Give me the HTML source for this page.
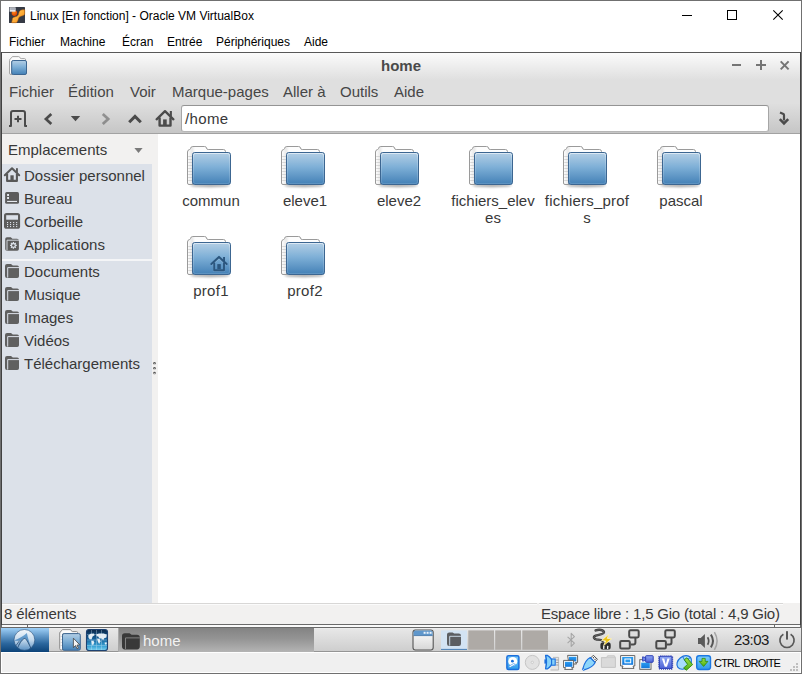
<!DOCTYPE html>
<html><head><meta charset="utf-8">
<style>
*{box-sizing:border-box;margin:0;padding:0}
html,body{width:802px;height:674px;overflow:hidden;background:#fff}
body{font-family:"Liberation Sans",sans-serif;position:relative}
.a{position:absolute}
.t{position:absolute;white-space:nowrap;line-height:1}
.ht{font-size:12px;color:#000}
.gm{font-size:15px;color:#464646}
.sp{font-size:15px;color:#383838}
.lbl{position:absolute;width:110px;text-align:center;font-size:15px;line-height:17px;color:#383838;white-space:nowrap}
svg{position:absolute;overflow:visible}
</style></head><body>
<!-- shared defs -->
<svg width="0" height="0" style="left:0;top:0">
<defs>
<linearGradient id="fblue" x1="0" y1="0" x2="0" y2="1"><stop offset="0" stop-color="#b4cfe5"/><stop offset=".45" stop-color="#7fb0d7"/><stop offset="1" stop-color="#4380b6"/></linearGradient>
<linearGradient id="fback" x1="0" y1="0" x2="1" y2="0"><stop offset="0" stop-color="#ffffff"/><stop offset=".12" stop-color="#e9e9e9"/><stop offset=".2" stop-color="#fdfdfd"/></linearGradient>
<linearGradient id="fhl" x1="0" y1="0" x2="0" y2="1"><stop offset="0" stop-color="#fff" stop-opacity=".55"/><stop offset=".15" stop-color="#fff" stop-opacity=".2"/><stop offset="1" stop-color="#fff" stop-opacity=".12"/></linearGradient>
<filter id="blur1" x="-20%" y="-100%" width="140%" height="300%"><feGaussianBlur stdDeviation="1.1"/></filter>
<symbol id="folder" viewBox="0 0 52 48" overflow="visible">
  <ellipse cx="26" cy="43.6" rx="20" ry="1.6" fill="#000" opacity=".32" filter="url(#blur1)"/>
  <path d="M3.5,41 V10 Q3.5,8 5.4,7.6 Q6.5,7.3 6.6,6.4 Q6.8,4.5 8.8,4.5 H20.4 Q22.4,4.5 22.5,6 Q22.6,7.5 24.2,7.5 H39.4 Q41.5,7.5 41.5,9.6 V14 H9 V42.5 H5 Q3.5,42.5 3.5,41 Z" fill="url(#fback)" stroke="#9a9a9a" stroke-width="1"/>
  <g stroke="#c4c4c4" stroke-width="1.2" opacity=".6"><path d="M4.2,14.5H8M4.2,17.5H8M4.2,20.5H8M4.2,23.5H8M4.2,26.5H8M4.2,29.5H8M4.2,32.5H8M4.2,35.5H8M4.2,38.5H8"/></g>
  <rect x="8.5" y="10.5" width="38" height="32" rx="2.2" fill="url(#fblue)" stroke="#3c6691" stroke-width="1"/>
  <rect x="9.5" y="11.5" width="36" height="30" rx="1.8" fill="none" stroke="url(#fhl)" stroke-width="1"/>
</symbol>
</defs>
</svg>
<!-- host window border -->
<div class="a" style="left:0;top:0;width:802px;height:674px;border:1px solid #707070"></div>

<!-- host title -->
<svg style="left:0;top:0" width="802" height="52" viewBox="0 0 802 52">
 <defs>
  <linearGradient id="vbo" x1="0" y1="0" x2="1" y2="1"><stop offset="0" stop-color="#ffd06a"/><stop offset=".5" stop-color="#ffae38"/><stop offset="1" stop-color="#f08a18"/></linearGradient>
  <radialGradient id="vbr" cx=".4" cy=".35" r=".7"><stop offset="0" stop-color="#ff8a1a"/><stop offset="1" stop-color="#d83a00"/></radialGradient>
 </defs>
 <rect x="9" y="7" width="16" height="16" rx=".6" fill="#353a45"/>
 <circle cx="14.4" cy="13.1" r="2.8" fill="url(#vbr)"/>
 <path d="M19.4,11.6 Q20.4,9.9 22.4,9.8 H24.7 V14.3 Q23.6,15.9 20.8,16.2 Q18.9,16.7 18.4,18.5 Q17.9,21.4 16.4,22.7 H11.7 L12.5,18.5 Q13,17.1 15,16.9 Q17.6,16.6 18.4,14.8 Q18.9,13 19.4,11.6 Z" fill="url(#vbo)" stroke="#c4650c" stroke-width=".5"/>
 <rect x="9.6" y="7.4" width="6" height="4.3" fill="#e4e6ea"/>
 <rect x="10.2" y="8" width="4.8" height="2" fill="#8a909c" opacity=".6"/>
 <rect x="682" y="15" width="10" height="1" fill="#000"/>
 <rect x="727.5" y="10.5" width="9" height="9" fill="none" stroke="#000" stroke-width="1"/>
 <path d="M773.3,10.3 L782.7,19.7 M782.7,10.3 L773.3,19.7" stroke="#000" stroke-width="1.1"/>
</svg>
<div class="t ht" style="left:30px;top:10px">Linux [En fonction] - Oracle VM VirtualBox</div>
<!-- host menu -->
<div class="t ht" style="left:9px;top:36px">Fichier</div>
<div class="t ht" style="left:60px;top:36px">Machine</div>
<div class="t ht" style="left:122px;top:36px">Écran</div>
<div class="t ht" style="left:167px;top:36px">Entrée</div>
<div class="t ht" style="left:216px;top:36px">Périphériques</div>
<div class="t ht" style="left:304px;top:36px">Aide</div>

<!-- guest chrome -->
<div class="a" style="left:1px;top:52px;width:800px;height:576px;background:#414141"></div><div class="a" style="left:2px;top:52px;width:798px;height:1px;background:#585858"></div>
<div class="a" style="left:2px;top:53px;width:798px;height:27px;background:linear-gradient(#fbfbfb,#dfdfdf)"></div>
<div class="a" style="left:2px;top:80px;width:798px;height:24px;background:#dfdfdf"></div>
<div class="a" style="left:2px;top:104px;width:798px;height:29px;background:linear-gradient(#dedede,#c6c6c6)"></div>
<div class="a" style="left:2px;top:133px;width:798px;height:1px;background:#a2a2a2"></div>
<div class="t" style="left:2px;width:798px;text-align:center;top:58px;font-size:15px;font-weight:bold;color:#4a4a4a">home</div>
<svg style="left:0;top:53px" width="802" height="27" viewBox="0 53 802 27">
 <path d="M9.5,73 V60.4 Q9.5,59 10.8,58.6 L11.6,57.4 Q12,56.6 13,56.6 H18.6 Q19.6,56.6 19.9,57.6 Q20.2,58.6 21.2,58.6 H24.4 Q25.6,58.6 25.6,59.8 V61 H12 V74.5 H11 Q9.5,74.5 9.5,73 Z" fill="#fbfbfb" stroke="#9c9c9c" stroke-width=".9"/>
 <rect x="11.7" y="60.5" width="14.8" height="14" rx="1.5" fill="url(#fblue)" stroke="#3c6691" stroke-width="1"/>
 <g fill="#757575">
  <rect x="732" y="64" width="9" height="2"/>
  <rect x="756" y="64" width="10" height="2"/><rect x="760" y="60" width="2" height="10"/>
 </g>
 <path d="M780.7,61.4 L788.6,69.4 M788.6,61.4 L780.7,69.4" stroke="#757575" stroke-width="2"/>
</svg>
<!-- guest menu -->
<div class="t gm" style="left:9px;top:84px">Fichier</div>
<div class="t gm" style="left:68px;top:84px">Édition</div>
<div class="t gm" style="left:130px;top:84px">Voir</div>
<div class="t gm" style="left:172px;top:84px">Marque-pages</div>
<div class="t gm" style="left:283px;top:84px">Aller à</div>
<div class="t gm" style="left:340px;top:84px">Outils</div>
<div class="t gm" style="left:394px;top:84px">Aide</div>
<!-- location entry -->
<div class="a" style="left:181px;top:105px;width:588px;height:27px;background:#fff;border:1px solid #a6a6a6;border-top-color:#949494;border-bottom-color:#b6b6b6;border-radius:3px"></div>
<div class="t" style="left:185px;top:111px;font-size:15px;color:#383838;letter-spacing:.35px">/home</div>

<!-- toolbar icons -->
<svg style="left:0;top:104px" width="802" height="30" viewBox="0 104 802 30">
 <g id="tbi" fill="none" stroke="#4b4b4b">
  <!-- new tab -->
  <path d="M9,126 H11 V113 Q11,111 13,111 H23 Q25,111 25,113 V126 H27" stroke-width="2" stroke-linejoin="round"/>
  <path d="M14.5,119 H21.5 M18,115.8 V122.2" stroke-width="2"/>
  <!-- back -->
  <path d="M51.3,113.9 L45.9,119 L51.3,124.1" stroke-width="2.7"/>
  <!-- forward (disabled) -->
  <path d="M102.8,113.9 L108.2,119 L102.8,124.1" stroke-width="2.7" opacity=".5"/>
  <!-- up -->
  <path d="M129.2,122.2 L135,116.4 L140.8,122.2" stroke-width="3"/>
  <!-- home -->
  <path d="M156.6,119.3 L165,111.2 L173.4,119.3" stroke-width="2.3" stroke-linejoin="round" stroke-linecap="round"/>
  <path d="M159.6,117.5 V125.6 H170.5 V117.5" stroke-width="2.4" stroke-linejoin="round"/>
  <!-- go -->
  <path d="M780,112.6 L783.4,114 Q784,114.3 784,115.2 V120.4" stroke-width="2.2"/>
  <path d="M779.8,119.2 L784,123.4 L788.2,119.2" stroke-width="2.6"/>
 </g>
 <g fill="#4b4b4b">
  <polygon points="70.8,116 80.2,116 75.5,121.2"/>
  <rect x="169.8" y="111" width="2.1" height="5.5"/>
  <rect x="163.1" y="119.4" width="3.6" height="5.6"/>
 </g>
</svg>
<!-- side pane -->
<div class="a" style="left:2px;top:134px;width:156px;height:469px;background:#f2f1f0"></div>
<div class="a" style="left:2px;top:164px;width:150px;height:439px;background:#dce1e9"></div>
<div class="a" style="left:2px;top:259px;width:150px;height:2px;background:#f4f5f7"></div>
<div class="t sp" style="left:8px;top:142px">Emplacements</div>
<div class="t sp" style="left:24px;top:168px">Dossier personnel</div>
<div class="t sp" style="left:24px;top:191px">Bureau</div>
<div class="t sp" style="left:24px;top:214px">Corbeille</div>
<div class="t sp" style="left:24px;top:237px">Applications</div>
<div class="t sp" style="left:24px;top:264px">Documents</div>
<div class="t sp" style="left:24px;top:287px">Musique</div>
<div class="t sp" style="left:24px;top:310px">Images</div>
<div class="t sp" style="left:24px;top:333px">Vidéos</div>
<div class="t sp" style="left:24px;top:356px">Téléchargements</div>

<!-- side icons -->
<svg style="left:0;top:134px" width="160" height="470" viewBox="0 134 160 470">
 <polygon points="134.4,148 142.6,148 138.5,152.9" fill="#7a7a7a"/>
 <!-- home -->
 <g fill="none" stroke="#585858">
  <path d="M4.8,175.2 L12,168.2 L19.2,175.2" stroke-width="2" stroke-linejoin="round" stroke-linecap="round"/>
  <path d="M7.1,174 V180.9 H16.9 V174" stroke-width="2.1" stroke-linejoin="round"/>
 </g>
 <rect x="16" y="168.2" width="1.9" height="4.6" fill="#585858"/>
 <rect x="10.4" y="175.3" width="3.3" height="5" fill="#585858"/>
 <!-- desktop -->
 <rect x="5.1" y="192.1" width="13.9" height="11.7" rx="1.6" fill="#5c5c5c"/>
 <rect x="7.1" y="194" width="1.9" height="2" fill="#e6e9ee"/>
 <rect x="7.1" y="197" width="1.9" height="2" fill="#e6e9ee"/>
 <rect x="7.1" y="200.9" width="9.9" height="1.1" fill="#e6e9ee"/>
 <!-- trash -->
 <rect x="4" y="213.1" width="16.1" height="15.7" rx="2.6" fill="#5c5c5c"/>
 <rect x="6.2" y="215.2" width="11.8" height="4.5" fill="#dce1e9"/>
 <g fill="#dce1e9">
  <rect x="7" y="222" width="1.1" height="1.1"/><rect x="10" y="222" width="1.1" height="1.1"/><rect x="13.1" y="222" width="1.1" height="1.1"/><rect x="16.1" y="222" width="1.1" height="1.1"/>
  <rect x="7" y="224" width="1.1" height="1.1"/><rect x="10" y="224" width="1.1" height="1.1"/><rect x="13.1" y="224" width="1.1" height="1.1"/><rect x="16.1" y="224" width="1.1" height="1.1"/>
  <rect x="7" y="226" width="1.1" height="1.1"/><rect x="10" y="226" width="1.1" height="1.1"/><rect x="13.1" y="226" width="1.1" height="1.1"/><rect x="16.1" y="226" width="1.1" height="1.1"/>
 </g>
 <!-- applications -->
 <path d="M5.2,239 Q5.2,237.3 7,237.3 H10.8 L12.4,238.7 H17 Q18.9,238.7 18.9,240.4 V249 Q18.9,250.7 17.2,250.7 H7 Q5.2,250.7 5.2,249 Z" fill="#5c5c5c"/>
 <path d="M7,250.3 V240.2 H19" fill="none" stroke="#dce1e9" stroke-width=".9"/>
 <g transform="translate(13.4,245.4)">
  <circle r="2.45" fill="#dce1e9"/>
  <g stroke="#dce1e9" stroke-width="1.3"><path d="M0,-3.35V3.35M-3.35,0H3.35M-2.37,-2.37L2.37,2.37M-2.37,2.37L2.37,-2.37"/></g>
  <circle r="1.25" fill="#5c5c5c"/>
 </g>
 <!-- folders -->
 <path d="M5,266 Q5,264 7,264 H11 L12.8,265.5 H17.2 Q19,265.5 19,267.3 V276.2 Q19,278 17.2,278 H7 Q5,278 5,276 Z" fill="#606060"/><path d="M7.7,277.6 V267.6 H19" fill="none" stroke="#dce1e9" stroke-width="1"/><path d="M5,289 Q5,287 7,287 H11 L12.8,288.5 H17.2 Q19,288.5 19,290.3 V299.2 Q19,301 17.2,301 H7 Q5,301 5,299 Z" fill="#606060"/><path d="M7.7,300.6 V290.6 H19" fill="none" stroke="#dce1e9" stroke-width="1"/><path d="M5,312 Q5,310 7,310 H11 L12.8,311.5 H17.2 Q19,311.5 19,313.3 V322.2 Q19,324 17.2,324 H7 Q5,324 5,322 Z" fill="#606060"/><path d="M7.7,323.6 V313.6 H19" fill="none" stroke="#dce1e9" stroke-width="1"/><path d="M5,335 Q5,333 7,333 H11 L12.8,334.5 H17.2 Q19,334.5 19,336.3 V345.2 Q19,347 17.2,347 H7 Q5,347 5,345 Z" fill="#606060"/><path d="M7.7,346.6 V336.6 H19" fill="none" stroke="#dce1e9" stroke-width="1"/><path d="M5,358 Q5,356 7,356 H11 L12.8,357.5 H17.2 Q19,357.5 19,359.3 V368.2 Q19,370 17.2,370 H7 Q5,370 5,368 Z" fill="#606060"/><path d="M7.7,369.6 V359.6 H19" fill="none" stroke="#dce1e9" stroke-width="1"/>
 <!-- paned handle -->
 <g fill="#555"><circle cx="154.5" cy="363.2" r="1.3"/><circle cx="154.5" cy="368.2" r="1.3"/><circle cx="154.5" cy="373.1" r="1.3"/></g>
 <g fill="#f2f1f0" opacity=".7"><circle cx="154.5" cy="364" r=".8"/><circle cx="154.5" cy="369" r=".8"/><circle cx="154.5" cy="373.9" r=".8"/></g>
</svg>
<!-- main area -->
<div class="a" style="left:158px;top:134px;width:642px;height:469px;background:#fff"></div>
<svg style="left:184px;top:142px" width="52" height="48"><use href="#folder"/></svg>
<svg style="left:278px;top:142px" width="52" height="48"><use href="#folder"/></svg>
<svg style="left:372px;top:142px" width="52" height="48"><use href="#folder"/></svg>
<svg style="left:466px;top:142px" width="52" height="48"><use href="#folder"/></svg>
<svg style="left:560px;top:142px" width="52" height="48"><use href="#folder"/></svg>
<svg style="left:654px;top:142px" width="52" height="48"><use href="#folder"/></svg>
<svg style="left:184px;top:232px" width="52" height="48"><use href="#folder"/></svg>
<svg style="left:278px;top:232px" width="52" height="48"><use href="#folder"/></svg>
<svg style="left:184px;top:232px" width="52" height="48" viewBox="0 0 52 48">
 <g transform="translate(0,0.9)" opacity=".35" fill="none" stroke="#cfe2f2"><path d="M27.4,32 L35,24.9 L42.6,32" stroke-width="1.9" stroke-linejoin="round"/><path d="M30.2,31 V37.7 H40 V31" stroke-width="1.7"/></g>
 <g fill="none" stroke="#2b567e"><path d="M27.4,32 L35,24.9 L42.6,32" stroke-width="2.1" stroke-linejoin="round" stroke-linecap="round"/><path d="M30.2,30.5 V38.2 H40 V30.5" stroke-width="1.9" stroke-linejoin="round"/></g>
 <rect x="39.1" y="25" width="1.9" height="4.6" fill="#2b567e"/>
 <rect x="33.3" y="32.1" width="3.5" height="5" fill="#2b567e"/>
</svg>
<div class="lbl" style="left:156px;top:192px">commun</div>
<div class="lbl" style="left:250px;top:192px">eleve1</div>
<div class="lbl" style="left:344px;top:192px">eleve2</div>
<div class="lbl" style="left:438px;top:192px">fichiers_elev<br>es</div>
<div class="lbl" style="left:532px;top:192px;letter-spacing:.2px">fichiers_prof<br>s</div>
<div class="lbl" style="left:626px;top:192px">pascal</div>
<div class="lbl" style="left:156px;top:282px;letter-spacing:.3px">prof1</div>
<div class="lbl" style="left:250px;top:282px;letter-spacing:.3px">prof2</div>

<!-- status bar -->
<div class="a" style="left:2px;top:603px;width:798px;height:21px;background:#f2f1f0"></div>
<div class="a" style="left:2px;top:603px;width:535px;height:2px;background:linear-gradient(#d8d7d6 50%,#fbfbfb 50%)"></div><div class="a" style="left:539px;top:603px;width:244px;height:2px;background:linear-gradient(#d8d7d6 50%,#fbfbfb 50%)"></div>
<div class="t sp" style="left:4px;top:606px;letter-spacing:-0.1px">8 éléments</div>
<div class="t sp" style="left:541px;top:606px;letter-spacing:-0.2px">Espace libre : 1,5 Gio (total : 4,9 Gio)</div>
<div class="a" style="left:2px;top:624px;width:798px;height:1px;background:#6a6a6a"></div>
<div class="a" style="left:1px;top:625px;width:800px;height:2px;background:#fafafa"></div>
<div class="a" style="left:1px;top:627px;width:800px;height:1px;background:#6a6a6a"></div>

<!-- taskbar -->
<div class="a" style="left:1px;top:628px;width:800px;height:24px;background:linear-gradient(#ececec 0,#ececec 1px,#e7e7e7 1px,#cecece 23px,#959595 23px)"></div>
<div class="a" style="left:1px;top:628px;width:48px;height:24px;background:linear-gradient(#9fd0f7,#5e95c6 35%,#2b669d 65%,#0c4378)"></div>
<div class="a" style="left:118px;top:628px;width:196px;height:24px;background:linear-gradient(#838383,#949494 45%,#b4b4b4);border-left:1px solid #a8a8a8"></div>
<div class="t" style="left:143px;top:633px;font-size:15px;color:#f2f2f2">home</div>
<div class="t" style="left:734px;top:632px;font-size:15px;color:#1a1a1a;letter-spacing:-0.55px">23:03</div>
<svg style="left:0;top:624px" width="802" height="30" viewBox="0 624 802 30">
 <defs>
  <linearGradient id="lgcirc" x1="0" y1="0" x2="0" y2="1"><stop offset="0" stop-color="#f4f8fc"/><stop offset=".5" stop-color="#c4d9ec"/><stop offset="1" stop-color="#5b91c3"/></linearGradient>
  <linearGradient id="globeg" x1="0" y1="0" x2="0" y2="1"><stop offset="0" stop-color="#0b2748"/><stop offset=".45" stop-color="#14609a"/><stop offset=".8" stop-color="#3aa4d6"/><stop offset="1" stop-color="#7fd0ee"/></linearGradient>
  <linearGradient id="wing" x1="0" y1="0" x2="0" y2="1"><stop offset="0" stop-color="#6fa6d6"/><stop offset="1" stop-color="#3f78ad"/></linearGradient>
  <linearGradient id="sdbody" x1="0" y1="0" x2="0" y2="1"><stop offset="0" stop-color="#ffffff"/><stop offset="1" stop-color="#d6d6d6"/></linearGradient>
 </defs>
 <!-- notches in border strip -->
 <rect x="1" y="625" width="1" height="2" fill="#6a6a6a"/><rect x="800" y="625" width="1" height="2" fill="#6a6a6a"/><rect x="27" y="625" width="1" height="2" fill="#6a6a6a"/><rect x="774" y="625" width="1" height="2" fill="#6a6a6a"/>
 <!-- menu logo -->
 <circle cx="24.4" cy="639.9" r="10.4" fill="url(#lgcirc)" stroke="#28507c" stroke-width=".6"/>
 <path d="M14.2,640.3 C18,639.3 23,636.3 26.9,632.9 C27.6,637 29.6,643 30.9,648.3 C28.8,643.8 27.3,640.6 25.1,638.3 C22.6,638.8 20.4,642 17.6,647.8 C18.3,644 19.4,642 20.6,640.2 C18.2,641 16.2,641 14.2,640.3 Z" fill="url(#wing)"/>
 <path d="M30.9,648.3 C28.8,643.8 27.3,640.6 25.1,638.3 C22.6,638.8 20.4,642 17.6,647.8 M19.6,640.6 L16,645.6" fill="none" stroke="#1d3f66" stroke-width=".7"/>
 <!-- file manager launcher -->
 <path d="M59.7,648.5 V633 Q59.7,631.8 60.9,631.6 L61.8,630.2 Q62,629.6 62.8,629.6 H70.2 Q71.2,629.6 71.4,630.6 Q71.6,631.6 72.6,631.6 H76.6 Q77.6,631.6 77.6,632.6 V634 H62.5 V650 H61 Q59.7,650 59.7,648.5 Z" fill="#fbfbfb" stroke="#8c8c8c" stroke-width="1"/>
 <path d="M60.4,636.5H62.4M60.4,639.5H62.4M60.4,642.5H62.4M60.4,645.5H62.4" stroke="#d4d4d4" stroke-width=".8"/>
 <rect x="62.5" y="633.6" width="17.8" height="16.7" rx="1.6" fill="url(#fblue)" stroke="#3c6691" stroke-width="1"/>
 <path d="M73.4,638.2 V647.6 L75.6,645.6 L77,648.8 L78.4,648.2 L77,645.1 L79.8,644.9 Z" fill="#f4f4f4" stroke="#444" stroke-width=".8" stroke-linejoin="round"/>
 <!-- globe launcher -->
 <rect x="86.5" y="629.5" width="21" height="21" rx="2.6" fill="url(#globeg)" stroke="#1d4272" stroke-width="1.1"/>
 <g stroke="#cfeaf8" stroke-width=".6" opacity=".55"><path d="M91.5,630V650M96.5,630V650M101.5,630V650M87,634.5H107M87,640H107M87,645.5H107"/></g>
 <g fill="#eef5fa" opacity=".95">
  <path d="M88.2,635.5 L90.5,633.8 L94,633.6 L94.6,635.2 L92.6,636.6 L91.8,638.8 L90,639.6 L88.6,638 Z"/>
  <path d="M91.4,641 L93.4,640.6 L94.2,642.6 L93,645.6 L91.8,644 Z"/>
  <path d="M96.4,634.2 L99,633.4 L103.8,633.6 L106.8,634.8 L106.4,637.6 L104.2,638.2 L103.2,640.2 L101.6,638.6 L99.4,638.4 L98.2,636.4 L96.6,636.2 Z"/>
  <path d="M97,638.6 L99.6,638.8 L100.4,641.2 L99.2,644 L98,642 Z"/>
  <path d="M104.6,642.6 L106.6,642.2 L106.8,644.2 L105,644.4 Z"/>
 </g>
 <!-- task button folder icon -->
 <path d="M122,636 Q122,633.2 124.8,633.2 H129.6 L131.6,634.8 H137 Q139.8,634.8 139.8,637.4 V646.6 Q139.8,649.4 137,649.4 H124.8 Q122,649.4 122,646.6 Z" fill="#393939"/>
 <path d="M125.5,649 V637.9 H139.8" fill="none" stroke="#8a8a8a" stroke-width=".9"/>
 <!-- show desktop -->
 <rect x="413" y="630" width="20.2" height="20" rx="2.4" fill="url(#sdbody)" stroke="#555" stroke-width="1.1"/>
 <path d="M413.6,635.4 V632.2 Q413.6,630.6 415.2,630.6 H431 Q432.6,630.6 432.6,632.2 V635.4 Z" fill="#5f97cc"/>
 <path d="M413.6,635.6 H432.6" stroke="#3b6ea3" stroke-width=".8"/>
 <g fill="#eaf2fa"><rect x="423.6" y="631.8" width="2" height="2"/><rect x="426.6" y="631.8" width="2" height="2"/><rect x="429.6" y="631.8" width="2" height="2"/></g>
 <!-- pager -->
 <rect x="441" y="630.4" width="26" height="19.3" fill="#d3e3f3"/><rect x="441" y="648.9" width="26" height="1" fill="#4a7fb5"/>
 <rect x="468.3" y="630.4" width="25.7" height="19.3" fill="#aeaaa6"/>
 <rect x="495.2" y="630.4" width="25.8" height="19.3" fill="#aeaaa6"/>
 <rect x="522.3" y="630.4" width="25.7" height="19.3" fill="#aeaaa6"/>
 <path d="M447,634.6 Q447,632.4 449.2,632.4 H452.6 L454.2,633.6 H458.8 Q461,633.6 461,635.8 V643.8 Q461,646 458.8,646 H449.2 Q447,646 447,643.8 Z" fill="#5c5e62"/>
 <path d="M449.7,645.6 V636.3 H461" fill="none" stroke="#d3e3f3" stroke-width=".9"/>
 <!-- bluetooth -->
 <path d="M567.6,636.8 L574.4,643.2 L571.2,646.4 V633.4 L574.4,636.6 L567.6,643.2" fill="none" stroke="#a6a6a6" stroke-width="1.1" stroke-linejoin="round"/>
 <!-- power/plug -->
 <path d="M595.6,630.4 C599,629.2 603.8,629.8 604,632.2 C604.2,634.6 598.4,634.6 595.6,635.6 C592.8,636.8 593.8,639.4 596.8,639.6 C599.4,639.8 601.6,639.8 602.8,640.8" fill="none" stroke="#3a3a3a" stroke-width="2.4" stroke-linecap="round"/>
 <path d="M595.6,630.4 C599,629.2 603.8,629.8 604,632.2 C604.2,634.6 598.4,634.6 595.6,635.6 C592.8,636.8 593.8,639.4 596.8,639.6 C599.4,639.8 601.6,639.8 602.8,640.8" fill="none" stroke="#7a7a7a" stroke-width=".7" stroke-linecap="round"/>
 <rect x="600.4" y="642.3" width="10.3" height="7.3" rx="2.6" fill="#2e2e2e"/>
 <rect x="603.1" y="645.8" width="1.3" height="3.2" rx=".5" fill="#f4f4f4"/><rect x="607" y="645.8" width="1.3" height="3.2" rx=".5" fill="#f4f4f4"/>
 <path d="M608.8,634.2 L601.6,640.4 L605.6,641 L603.6,645.6 L611.6,638.8 L607.2,638.4 Z" fill="#eec413" stroke="#fff4c0" stroke-width=".8" stroke-linejoin="round"/>
 <!-- network x2 -->
 <g transform="translate(0,0)"><path d="M635.4,638 V642.6 Q635.4,644.6 633.4,644.6 H630.5" fill="none" stroke="#4a4a4a" stroke-width="2"/><rect x="629.2" y="630.2" width="9.5" height="7.2" rx="1.3" fill="#dcdcdc" stroke="#4a4a4a" stroke-width="2"/><rect x="620.2" y="641" width="9.6" height="7.5" rx="1.3" fill="#d4d4d4" stroke="#4a4a4a" stroke-width="2"/></g> <g transform="translate(36.1,0)"><path d="M635.4,638 V642.6 Q635.4,644.6 633.4,644.6 H630.5" fill="none" stroke="#4a4a4a" stroke-width="2"/><rect x="629.2" y="630.2" width="9.5" height="7.2" rx="1.3" fill="#dcdcdc" stroke="#4a4a4a" stroke-width="2"/><rect x="620.2" y="641" width="9.6" height="7.5" rx="1.3" fill="#d4d4d4" stroke="#4a4a4a" stroke-width="2"/></g>
 <!-- volume -->
 <path d="M698,638 H700.7 L704.9,633.9 V648.1 L700.7,644 H698 Z" fill="#5a5a5a"/>
 <path d="M707.6,637.2 Q709.8,641 707.6,644.8" fill="none" stroke="#555" stroke-width="1.7"/>
 <path d="M710.9,634.6 Q715.1,641 710.9,647.4" fill="none" stroke="#555" stroke-width="2"/>
 <path d="M714.4,632.2 Q719.8,641 714.4,649.8" fill="none" stroke="#a4a4a4" stroke-width="1.5"/>
 <!-- power button -->
 <path d="M783.4,634.3 A7.1,7.1 0 1 0 790.6,634.3" fill="none" stroke="#585858" stroke-width="1.7"/>
 <rect x="786" y="631.2" width="2" height="8.4" fill="#585858"/>
</svg>

<!-- vbox status bar -->
<div class="a" style="left:1px;top:652px;width:800px;height:21px;background:#f0f0f0;border:1px solid #fff"></div>
<div class="t" style="left:714px;top:658px;font-size:11px;color:#000;letter-spacing:-0.8px;word-spacing:2px">CTRL DROITE</div>
<svg style="left:0;top:652px" width="802" height="22" viewBox="0 652 802 22">
 <defs>
  <linearGradient id="vbb" x1="0" y1="0" x2="0" y2="1"><stop offset="0" stop-color="#7ccdfb"/><stop offset="1" stop-color="#2f9aec"/></linearGradient>
  <linearGradient id="vbs" x1="0" y1="0" x2="0" y2="1"><stop offset="0" stop-color="#2a9cf0"/><stop offset="1" stop-color="#1478dc"/></linearGradient>
  <linearGradient id="vbv" x1="0" y1="0" x2="0" y2="1"><stop offset="0" stop-color="#8ea6f4"/><stop offset="1" stop-color="#4e63d6"/></linearGradient>
  <linearGradient id="vbg" x1="0" y1="0" x2="0" y2="1"><stop offset="0" stop-color="#9be04a"/><stop offset="1" stop-color="#4db014"/></linearGradient>
 </defs>
 <!-- hdd -->
 <rect x="506.9" y="655.7" width="12" height="13.8" rx="1.6" fill="url(#vbb)" stroke="#1b6fdc" stroke-width="1.5"/>
 <circle cx="512.8" cy="661.4" r="4.5" fill="#fff"/>
 <path d="M508.6,666.3 L513.6,663.6 L515.6,664.4 L510,667.6 Z" fill="#fff" stroke="#2a86e4" stroke-width=".6"/>
 <circle cx="512.4" cy="661.2" r="1.4" fill="#1b6fdc"/>
 <!-- cd (disabled) -->
 <circle cx="532.3" cy="662.4" r="7" fill="#e2e2e2" stroke="#c6c6c6" stroke-width="1"/>
 <circle cx="532.3" cy="662.4" r="1.2" fill="#eee" stroke="#c2c2c2" stroke-width=".7"/>
 <!-- audio -->
 <path d="M553,657.4 H558.6 V670 H550.5" fill="#e4e4e4" stroke="#b4b4b4" stroke-width=".9"/>
 <path d="M556.2,660H558.4M556.2,662.5H558.4M556.2,665H558.4" stroke="#8a8a8a" stroke-width=".8"/>
 <rect x="544.4" y="659.4" width="2" height="4.2" fill="#1b6fdc"/>
 <path d="M545.6,655.5 H547.6 Q552,658.4 552,662 Q552,665.8 547.6,668.8 H545.6 Q547.4,662 545.6,655.5 Z" fill="#86d2fa" stroke="#1b6fdc" stroke-width="1.3" stroke-linejoin="round"/>
 <rect x="551.6" y="659" width="3.6" height="6.2" fill="#86d2fa" stroke="#1b6fdc" stroke-width="1.1"/>
 <!-- network (two monitors) -->
 <g>
  <path d="M567.6,655.4 H577.6 V662.4 H575.4 L576.6,664 H569 Z" fill="#fff" stroke="#555" stroke-width=".9"/>
  <rect x="569" y="656.8" width="7.4" height="4.6" fill="url(#vbs)"/>
  <path d="M563.6,660.4 H573.6 V667.6 H571.6 L572.8,669.4 H564.6 L565.6,667.6 H563.6 Z" fill="#fff" stroke="#555" stroke-width=".9"/>
  <rect x="565" y="661.8" width="7.4" height="5" fill="url(#vbs)"/>
 </g>
 <!-- usb -->
 <g transform="translate(592.7,660) rotate(-45)">
  <rect x="-.2" y="-2.9" width="4" height="5.8" fill="#fff" stroke="#444" stroke-width=".9"/>
  <rect x="1.6" y="-1.7" width="1.1" height="1.1" fill="#222"/><rect x="1.6" y=".6" width="1.1" height="1.1" fill="#222"/>
  <path d="M0,-3.5 C-3.4,-4.6 -9,-3.2 -13,-0.9 Q-14.2,0 -13,.9 C-9,3.2 -3.4,4.6 0,3.5 Z" fill="#8ed6fa" stroke="#1b6fdc" stroke-width="1.2" stroke-linejoin="round"/>
  <circle cx="-13.2" cy="0" r=".9" fill="#dff2fd" stroke="#1b6fdc" stroke-width=".8"/>
 </g>
 <!-- shared folder (disabled) -->
 <path d="M601.4,657.6 H606.6 L607.6,655.8 H614.4 L615.4,657.6 V667.4 H601.4 Z" fill="#dadada" stroke="#c2c2c2" stroke-width=".9"/>
 <path d="M601.4,657.6 H615.4" stroke="#c8c8c8" stroke-width=".7"/>
 <!-- display -->
 <path d="M620.6,655.6 H634.8 V666 H633 L634,668.4 H622 L623,666 H620.6 Z" fill="#fff" stroke="#555" stroke-width=".9"/>
 <rect x="622.2" y="657" width="11" height="7.8" fill="url(#vbs)"/>
 <rect x="624.9" y="659" width="5.8" height="3.8" fill="#2a9cf0" stroke="#fff" stroke-width="1"/>
 <!-- video capture -->
 <rect x="639.8" y="659.7" width="11.2" height="9.6" fill="#fff" stroke="#555" stroke-width=".9"/>
 <rect x="641.2" y="662.6" width="8.6" height="5.6" fill="url(#vbs)"/>
 <rect x="645.6" y="655.7" width="7.6" height="6.6" rx=".7" fill="url(#vbv)" stroke="#2c3fb4" stroke-width="1"/>
 <path d="M645.6,657.6 L642.6,656.8 V661.2 L645.6,660.4 Z" fill="#6f86ea" stroke="#2c3fb4" stroke-width=".9" stroke-linejoin="round"/>
 <!-- cpu V -->
 <rect x="658.9" y="655.9" width="13.6" height="13.2" rx="1.5" fill="#2c3fb4" stroke="#2c3fb4" stroke-width="1.4" stroke-dasharray="1 1"/>
 <rect x="659.9" y="656.8" width="11.6" height="11.4" rx="1.2" fill="url(#vbv)"/>
 <path d="M661.9,658.6 H664.2 L665.8,664.2 L667.4,658.6 H669.7 L666.9,666.8 H664.7 Z" fill="#fff"/>
 <!-- mouse -->
 <g transform="translate(684.2,662.4) rotate(-38)"><ellipse rx="8" ry="6" fill="#a6dcfb" stroke="#1b6fdc" stroke-width="1.2"/><path d="M2.4,-5.7 Q0.6,0 2.4,5.7 M2,-.2 H7.9" fill="none" stroke="#1b6fdc" stroke-width=".9"/></g>
 <path d="M684.2,659.6 L687,657.8 L692.6,664.6 L686.4,670.2 L683.6,668 L687.6,664.4 Z" fill="url(#vbg)" stroke="#2e8a0a" stroke-width=".9" stroke-linejoin="round"/>
 <!-- keyboard capture -->
 <rect x="696.7" y="655.7" width="13.8" height="13.8" rx="2.4" fill="url(#vbb)" stroke="#1b78e2" stroke-width="1.4"/>
 <path d="M702,658.4 H705.2 V661.4 H707.9 L703.6,666.4 L699.2,661.4 H702 Z" fill="url(#vbg)" stroke="#2e8a0a" stroke-width=".8" stroke-linejoin="round"/>
 <!-- resize grip -->
 <g fill="#bebebe"><rect x="796" y="663" width="2" height="2"/><rect x="793" y="666" width="2" height="2"/><rect x="796" y="666" width="2" height="2"/><rect x="790" y="669" width="2" height="2"/><rect x="793" y="669" width="2" height="2"/><rect x="796" y="669" width="2" height="2"/></g>
</svg>
</body></html>
